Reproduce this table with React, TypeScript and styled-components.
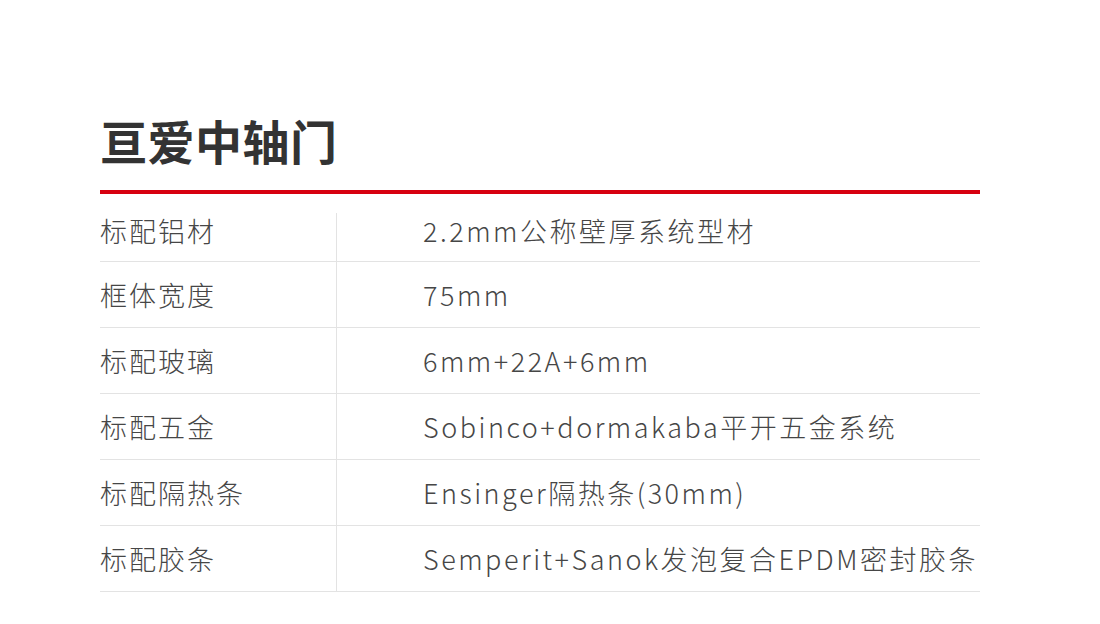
import React from 'react';
import styled, { createGlobalStyle } from 'styled-components';

const GlobalStyle = createGlobalStyle`
  body {
    margin: 0;
    background: #fff;
    font-family: "Noto Sans CJK SC", "Noto Sans", sans-serif;
  }
`;

const Page = styled.div`
  width: 1100px;
  height: 624px;
  padding: 108px 0 0 100px;
  box-sizing: border-box;
`;

const Section = styled.div`
  width: 880px;
`;

const Title = styled.h2`
  margin: 0;
  font-size: 47px;
  font-weight: 700;
  line-height: 64px;
  color: #333;
  letter-spacing: 0.5px;
`;

const RedRule = styled.div`
  margin-top: 18px;
  height: 4px;
  background: #d7000f;
`;

const Table = styled.div`
  margin-top: 19px;
  display: flex;
  flex-direction: column;
`;

const Row = styled.div<{ first?: boolean }>`
  display: flex;
  height: ${p => (p.first ? '49px' : '66px')};
  border-bottom: 1px solid #e3e3e3;
  box-sizing: border-box;
`;

const Label = styled.div<{ first?: boolean }>`
  width: 236px;
  display: flex;
  align-items: center;
  padding-bottom: ${p => (p.first ? '14px' : '0')};
  font-size: 27px;
  font-weight: 300;
  letter-spacing: 2px;
  color: #464646;
`;

const Value = styled.div<{ first?: boolean }>`
  flex: 1;
  display: flex;
  align-items: center;
  padding-left: 86px;
  padding-bottom: ${p => (p.first ? '14px' : '0')};
  border-left: 1px solid #e3e3e3;
  font-size: 27px;
  font-weight: 300;
  letter-spacing: 2.5px;
  color: #464646;
  white-space: nowrap;
`;

const specs = [
  ['标配铝材', '2.2mm公称壁厚系统型材'],
  ['框体宽度', '75mm'],
  ['标配玻璃', '6mm+22A+6mm'],
  ['标配五金', 'Sobinco+dormakaba平开五金系统'],
  ['标配隔热条', 'Ensinger隔热条(30mm)'],
  ['标配胶条', 'Semperit+Sanok发泡复合EPDM密封胶条'],
];

export default function App() {
  return (
    <>
      <GlobalStyle />
      <Page>
        <Section>
          <Title>亘爱中轴门</Title>
          <RedRule />
          <Table>
            {specs.map(([k, v], i) => (
              <Row key={k} first={i === 0}>
                <Label first={i === 0}>{k}</Label>
                <Value first={i === 0}>{v}</Value>
              </Row>
            ))}
          </Table>
        </Section>
      </Page>
    </>
  );
}
